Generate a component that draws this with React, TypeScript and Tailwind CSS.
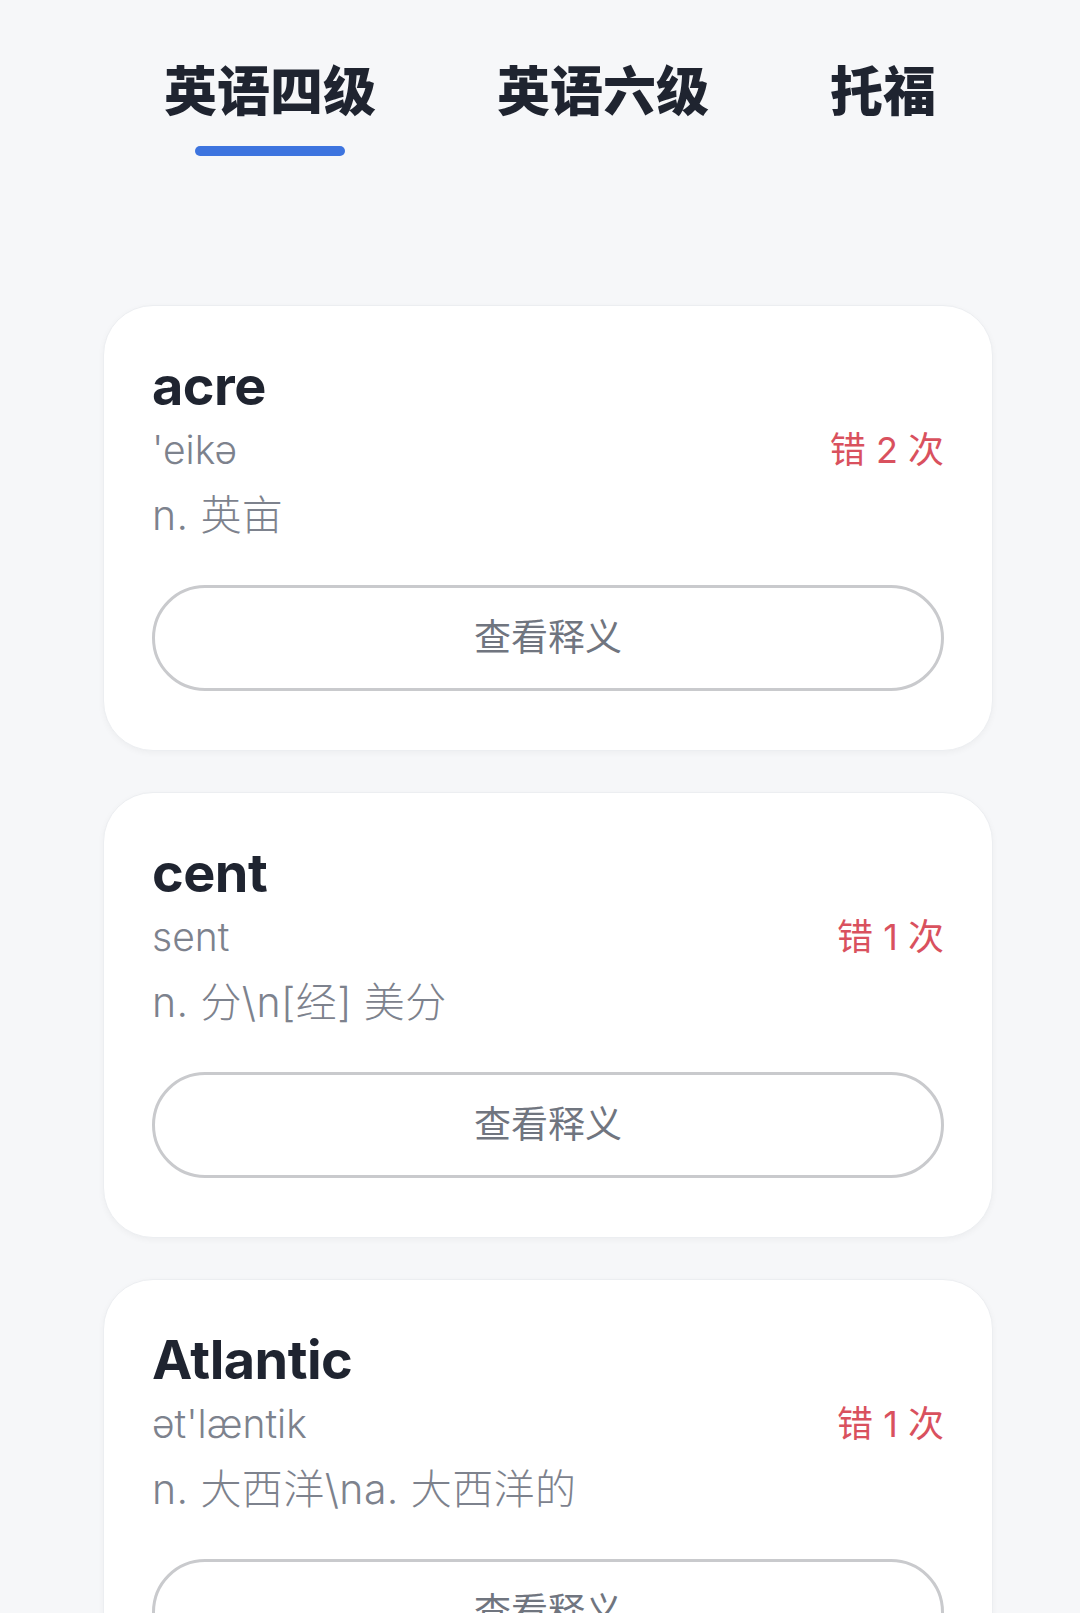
import type { ReactElement } from 'react'

type WrongWord = {
  word: string
  phonetic: string
  meaning: string
  wrong: number
}

const tabs = ['英语四级', '英语六级', '托福']

const words: WrongWord[] = [
  { word: 'acre', phonetic: "'eikə", meaning: 'n. 英亩', wrong: 2 },
  { word: 'cent', phonetic: 'sent', meaning: 'n. 分\\n[经] 美分', wrong: 1 },
  { word: 'Atlantic', phonetic: "ət'læntik", meaning: 'n. 大西洋\\na. 大西洋的', wrong: 1 },
]

const font = "font-['Inter','Noto_Sans_CJK_SC',sans-serif]"

function WordCard({ item }: { item: WrongWord }): ReactElement {
  return (
    <div className="h-[446px] rounded-[50px] border border-[#eceef1] bg-white px-[48px] pt-[47px] shadow-[0_2px_6px_rgba(0,0,0,0.04)]">
      <div className="h-[65px] text-[54px] leading-[65px] font-bold tracking-[-0.01em] text-[#1f2430]">
        {item.word}
      </div>
      <div className="mt-[8px] flex h-[48px] items-center justify-between">
        <span className="text-[39px] leading-[48px] font-light text-[#7d828d]">{item.phonetic}</span>
        <span className="text-[36px] leading-[48px] text-[#d9515e]">错 {item.wrong} 次</span>
      </div>
      <div className="mt-[17px] h-[48px] text-[41px] leading-[48px] font-light tracking-[0.01em] text-[#7d828d]">
        {item.meaning}
      </div>
      <button
        type="button"
        className="mt-[46px] flex h-[106px] w-full items-center justify-center rounded-full border-[3px] border-[#c9cacd] text-[37px] text-[#70757f]"
      >
        查看释义
      </button>
    </div>
  )
}

export default function App(): ReactElement {
  return (
    <div className={`h-[1613px] overflow-hidden bg-[#f6f7f9] ${font}`}>
      <nav className="flex gap-[121px] pt-[66px] pl-[164px]">
        {tabs.map((tab, i) => (
          <div key={tab} className="flex flex-col items-center">
            <span className="text-[53px] leading-[53px] font-black text-[#1f2430]">{tab}</span>
            {i === 0 ? (
              <span className="mt-[27px] h-[10px] w-[150px] rounded-full bg-[#3d74df]" />
            ) : null}
          </div>
        ))}
      </nav>

      <div className="mt-[149px] ml-[103px] flex w-[890px] flex-col gap-[41px]">
        {words.map((item) => (
          <WordCard key={item.word} item={item} />
        ))}
      </div>
    </div>
  )
}
